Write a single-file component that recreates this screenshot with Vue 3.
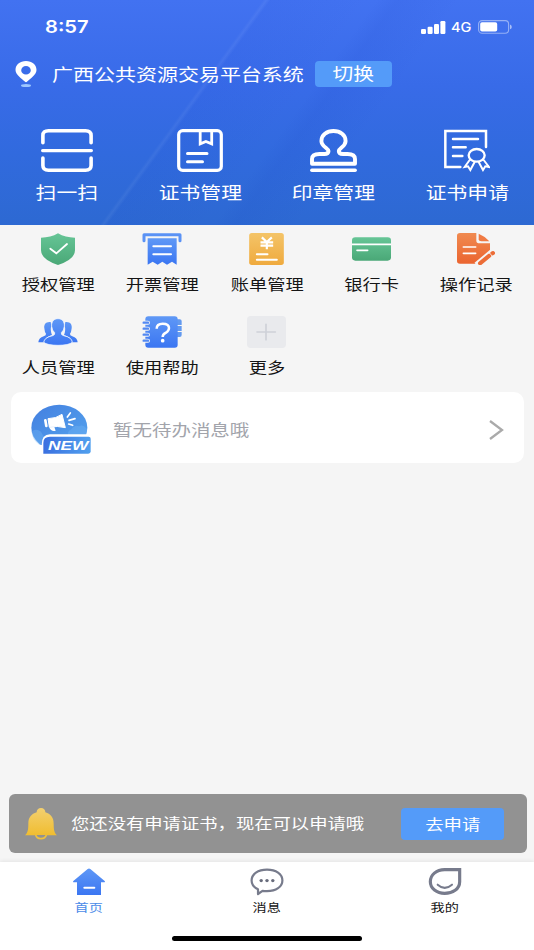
<script setup>
const menu = [
  { id: 'auth', label: '授权管理' },
  { id: 'invoice', label: '开票管理' },
  { id: 'bill', label: '账单管理' },
  { id: 'card', label: '银行卡' },
  { id: 'log', label: '操作记录' },
  { id: 'people', label: '人员管理' },
  { id: 'help', label: '使用帮助' },
  { id: 'more', label: '更多' },
]
</script>

<template>
  <div class="screen">
    <svg class="defs" width="0" height="0">
      <defs>
        <linearGradient id="g-green" x1="0" y1="0" x2="0" y2="1"><stop offset="0" stop-color="#66c596" /><stop offset="1" stop-color="#4aa877" /></linearGradient>
        <linearGradient id="g-blue" x1="0" y1="0" x2="0" y2="1"><stop offset="0" stop-color="#5f98f6" /><stop offset="1" stop-color="#3b76f2" /></linearGradient>
        <linearGradient id="g-yellow" x1="0" y1="0" x2="0" y2="1"><stop offset="0" stop-color="#f4c468" /><stop offset="1" stop-color="#efaa3e" /></linearGradient>
        <linearGradient id="g-orange" x1="0" y1="0" x2="0" y2="1"><stop offset="0" stop-color="#f08a50" /><stop offset="1" stop-color="#eb6530" /></linearGradient>
        <linearGradient id="g-bell" x1="0" y1="0" x2="0" y2="1"><stop offset="0" stop-color="#f3d070" /><stop offset="1" stop-color="#f0bd30" /></linearGradient>
        <linearGradient id="g-news" x1="0" y1="0" x2="1" y2="1"><stop offset="0" stop-color="#437fe0" /><stop offset="1" stop-color="#56a5ee" /></linearGradient>
        <linearGradient id="g-tag" x1="0" y1="0" x2="1" y2="0"><stop offset="0" stop-color="#3a70e0" /><stop offset="1" stop-color="#51a0ee" /></linearGradient>
      </defs>
    </svg>

    <header class="hero">
      <div class="status">
        <span class="time">8:57</span>
        <div class="signals">
          <svg width="25" height="13" viewBox="0 0 25 13" fill="#fff">
            <rect x="0" y="8" width="5" height="5" rx="1.2" /><rect x="6.6" y="5.7" width="5" height="7.3" rx="1.2" />
            <rect x="13" y="3" width="5" height="10" rx="1.2" /><rect x="19.4" y="0" width="5" height="13" rx="1.2" />
          </svg>
          <span class="net">4G</span>
          <svg width="34" height="14" viewBox="0 0 34 14">
            <rect x=".6" y=".6" width="30" height="12.6" rx="3.5" fill="none" stroke="#fff" stroke-opacity=".45" stroke-width="1.1" />
            <rect x="2.2" y="2.2" width="17" height="9.4" rx="1.8" fill="#fff" />
            <path d="M32 4.6q1.8 .6 1.8 2.3t-1.8 2.3z" fill="#fff" fill-opacity=".55" />
          </svg>
        </div>
      </div>

      <div class="place">
        <svg width="22" height="27" viewBox="0 0 22 27">
          <ellipse cx="11" cy="24.5" rx="5" ry="1.5" fill="#9dc6ff" />
          <path fill="#fff" fill-rule="evenodd" d="M11 0C17 0 21.5 3.7 21.5 9 21.5 14 15 17.5 12.2 20.6Q11 21.8 9.8 20.6C7 17.5 .5 14 .5 9 .5 3.7 5 0 11 0ZM11 5A4.8 4.3 0 1 0 11 13.600A4.8 4.3 0 1 0 11 5Z" />
        </svg>
        <div class="place-name"><span class="wide">广西公共资源交易平台系统</span></div>
        <button class="switch"><span class="wide">切换</span></button>
      </div>

      <nav class="quick">
        <div class="quick-item">
          <svg width="52" height="43" viewBox="0 0 52 43" fill="none" stroke="#fff" stroke-width="3.6" stroke-linecap="round">
            <path d="M1.900 13.700V6.500Q1.900 1.800 7.500 1.800H44.500Q50.100 1.800 50.100 6.500V13.700M1.900 29V36.500Q1.900 41.200 7.500 41.200H44.500Q50.100 41.200 50.100 36.500V29" />
            <path d="M1.600 21.600H50.400" stroke-width="3.200" />
          </svg>
          <span class="wide">扫一扫</span>
        </div>
        <div class="quick-item">
          <svg width="46" height="43" viewBox="0 0 46 43" fill="none" stroke="#fff" stroke-width="3.200" stroke-linecap="round">
            <rect x="1.700" y="1.600" width="42.600" height="39.800" rx="4" />
            <path d="M23.200 2V14.800L28.900 12.400L34.700 14.800V2" stroke-width="2.800" />
            <path d="M10.500 24.500H30M10.500 32.700H25.500" stroke-width="3" />
          </svg>
          <span class="wide">证书管理</span>
        </div>
        <div class="quick-item">
          <svg width="47" height="43" viewBox="0 0 47 43" fill="none" stroke="#fff" stroke-width="3.900" stroke-linecap="round" stroke-linejoin="round">
            <path d="M18.500 22C18.500 19 11.400 17.800 11.400 11.900C11.400 6.200 16.700 2 23.500 2S35.600 6.200 35.600 11.900C35.600 17.800 28.800 19 28.800 22Q28.800 25 33 25H37.500Q45 25 45 30V34.800H2V30Q2 25 9.500 25H14.300Q18.500 25 18.500 22Z" />
            <path d="M1.800 41.200H45.200" stroke-width="3.400" />
          </svg>
          <span class="wide">印章管理</span>
        </div>
        <div class="quick-item">
          <svg width="46" height="43" viewBox="525 57 138 129" fill="none" stroke="#fff" stroke-width="7.500" stroke-linecap="round">
            <path d="M651 111V63H529V171H574" />
            <path d="M552 87H627M552 112H590M552 138H580" stroke-width="7.500" />
            <ellipse cx="623" cy="136" rx="24" ry="19" stroke-width="7" />
            <path d="M602 150L587 171L597 169L604 180L617 156M644 150L660 171L649 169L642 180L629 156" stroke-width="6" />
          </svg>
          <span class="wide">证书申请</span>
        </div>
      </nav>
    </header>

    <section class="menu">
      <div v-for="item in menu" :key="item.id" class="menu-item">
        <svg v-if="item.id === 'auth'" width="34" height="32" viewBox="122 25 102 96">
          <path fill="url(#g-green)" d="M173 26Q195 39 224 39V77Q224 104 173 121Q122 104 122 77V39Q151 39 173 26Z" />
          <path d="M150 72L168 86L200 58" fill="none" stroke="#fff" stroke-width="5.500" stroke-linecap="round" />
        </svg>
        <svg v-else-if="item.id === 'invoice'" width="40" height="32" viewBox="427 25 118 96">
          <path fill="none" stroke="#5a92f5" stroke-width="9" stroke-linecap="round" stroke-linejoin="round" d="M432 48V30H540V48" />
          <path fill="url(#g-blue)" d="M443 41H530V120L516 111L501 120L487 111L473 120L458 111L443 120Z" />
          <path d="M460 65H513M460 89H513" stroke="#fff" stroke-width="6" stroke-linecap="round" />
        </svg>
        <svg v-else-if="item.id === 'bill'" width="35" height="32" viewBox="118 25 104 96">
          <rect x="118" y="25" width="104" height="96" rx="8" fill="url(#g-yellow)" />
          <path d="M156 38L171 52L186 38M171 52V74M152 53H190M152 63H190" fill="none" stroke="#fff" stroke-width="6.500" />
          <path d="M141 89H173M141 105H201" stroke="#fff" stroke-width="6" stroke-linecap="round" />
        </svg>
        <svg v-else-if="item.id === 'card'" width="39" height="32" viewBox="426 25 117 96">
          <rect x="426" y="38" width="117" height="70" rx="10" fill="url(#g-green)" />
          <path d="M426 59H543" stroke="#fff" stroke-width="5.500" /><path d="M441 77H473" stroke="#fff" stroke-width="5" stroke-linecap="round" />
        </svg>
        <svg v-else-if="item.id === 'log'" width="38" height="32" viewBox="741 25 114 96">
          <path fill="url(#g-orange)" d="M750 25H799V48Q799 56 809 56H840V79L797 117H750Q741 117 741 109V33Q741 25 750 25Z" />
          <path fill="#f07a43" d="M806 27Q824 34 838 50H814Q806 50 806 44Z" />
          <path d="M760 67H797M760 86H797" stroke="#fff" stroke-width="5" stroke-linecap="round" />
          <path d="M800 122L854 77" stroke="#f5f5f5" stroke-width="20" />
          <path d="M810 116L838 93M846 87L849 85" stroke="#ec6d37" stroke-width="12" stroke-linecap="round" />
          <path d="M838 84L847 95" stroke="#f5f5f5" stroke-width="2.500" />
        </svg>
        <svg v-else-if="item.id === 'people'" width="40" height="32" viewBox="114 33 118 96">
          <path fill="url(#g-blue)" d="M151 51C137 49 130 58 132 70Q133 82 137 86Q138 91 130 94Q115 99 114 112H131Q134 96 155 90Q149 74 153 62ZM195 51C209 49 216 58 214 70Q213 82 209 86Q208 91 216 94Q231 99 232 112H215Q212 96 191 90Q197 74 193 62Z" />
          <path fill="url(#g-blue)" stroke="#eaf2ff" stroke-width="2.500" d="M173 41C186 41 193 50 192 64Q191 77 183 83Q181 89 190 92Q215 97 216 112Q205 121 173 121Q141 121 130 112Q132 97 157 92Q165 89 163 83Q155 77 154 64C153 50 160 41 173 41Z" />
        </svg>
        <svg v-else-if="item.id === 'help'" width="40" height="32" viewBox="427 33 118 96">
          <path d="M530 43H539Q545 43 545 48V60H530ZM530 63H545V78H530ZM530 81H545V90Q545 96 539 96H530Z" fill="#6299ef" />
          <rect x="436" y="34" width="97" height="94" rx="9" fill="url(#g-blue)" />
          <path d="M434 53H444M434 71H444M434 89H444M434 107H444" stroke="#f5f5f5" stroke-width="12" stroke-linecap="round" />
          <path d="M431 53H444M431 71H444M431 89H444M431 107H444" stroke="#5389f2" stroke-width="7" stroke-linecap="round" />
          <path d="M470 71Q470 56 488 56Q507 56 507 69Q507 77 498 83Q488 88 488 96" fill="none" stroke="#fff" stroke-width="7.500" />
          <circle cx="488" cy="107" r="5.500" fill="#fff" />
        </svg>
        <svg v-else width="39" height="32" viewBox="742 33 117 96">
          <rect x="742" y="33" width="117" height="96" rx="11" fill="#e9eaed" />
          <path d="M772 81H827M799 58V104" stroke="#ced1d8" stroke-width="5" stroke-linecap="round" />
        </svg>
        <span class="wide">{{ item.label }}</span>
      </div>
    </section>

    <section class="notice">
      <svg class="news" width="60" height="51" viewBox="94 57 180 153">
        <ellipse cx="179" cy="128" rx="84" ry="69" fill="url(#g-news)" />
        <path d="M96 140Q108 128 124 140Q133 160 146 164L120 180Q96 162 96 140ZM215 133Q225 118 238 124Q251 116 262 132L261 150H205Q203 138 215 133Z" fill="#70b4f4" opacity=".4" />
        <path d="M145 101Q169 101 187 88L197 128Q174 122 149 126Z" fill="#fff" stroke="#fff" stroke-width="3" stroke-linejoin="round" />
        <path d="M137 106L140 123" stroke="#fff" stroke-width="8" stroke-linecap="round" />
        <path d="M148 127L164 126L168 137Q155 141 148 127Z" fill="#fff" />
        <path d="M203 96L212 84M208 106L226 101M207 117L219 121" stroke="#fff" stroke-width="5" stroke-linecap="round" />
        <path d="M100 215V180L126 180Q126 148 151 148H280V215Z" fill="#fff" />
        <path d="M151 155H267Q273 155 273 161V199Q273 206 266 206H131V174Q131 155 151 155Z" fill="url(#g-tag)" />
        <text x="145" y="195" class="new" textLength="121" lengthAdjust="spacingAndGlyphs">NEW</text>
      </svg>
      <div class="notice-text"><span class="wide">暂无待办消息哦</span></div>
      <svg class="chevron" width="15" height="20" viewBox="0 0 15 20" fill="none" stroke="#aaa" stroke-width="2.300"><path d="M1 1L13 10L1 19" /></svg>
    </section>

    <section class="toast">
      <svg width="32" height="32" viewBox="76 68 96 96">
        <path fill="url(#g-bell)" d="M124 68C132 68 137 73 137 81C153 86 162 96 162 115C162 135 164 142 172 150H76C84 142 86 135 86 115C86 96 95 86 111 81C111 73 116 68 124 68Z" />
        <path d="M108 149Q111 160 124 160T140 149" fill="#929292" stroke="#efc13c" stroke-width="5" />
      </svg>
      <div class="toast-text"><span class="wide">您还没有申请证书，现在可以申请哦</span></div>
      <button class="apply"><span class="wide">去申请</span></button>
    </section>

    <footer class="tabs">
      <div class="tab active">
        <svg width="32" height="28" viewBox="219 249 96 84">
          <path fill="url(#g-blue)" d="M263 252Q267 249 271 252L314 288Q317 292 311 292H303V330H231V292H223Q217 292 220 288Z" />
          <path d="M253 308H283" stroke="#fff" stroke-width="6" stroke-linecap="round" />
        </svg>
        <span class="wide">首页</span>
      </div>
      <div class="tab">
        <svg width="34" height="28" viewBox="0 0 34 28">
          <path d="M17 1.600C26 1.600 32.400 6.200 32.400 12.500S26 23.200 17 23.200Q14.500 23.200 12.500 22.800L8 26V21.200C4 19.300 1.600 16.300 1.600 12.500C1.600 6.200 8 1.600 17 1.600Z" fill="none" stroke="#777b8c" stroke-width="2.200" stroke-linejoin="round" />
          <g fill="#686c7c"><circle cx="11.200" cy="12.600" r="1.700" /><circle cx="17" cy="12.600" r="1.700" /><circle cx="22.800" cy="12.600" r="1.700" /></g>
        </svg>
        <span class="wide">消息</span>
      </div>
      <div class="tab">
        <svg width="34" height="28" viewBox="474 249 102 84" fill="none" stroke="#777b8c">
          <path d="M524 254H569V290C569 312 548 325 524 325S481 310 481 290S499 254 524 254Z" stroke-width="9.500" />
          <path d="M503 299Q524 318 546 299" stroke-width="6" stroke-linecap="round" />
        </svg>
        <span class="wide">我的</span>
      </div>
      <div class="home-bar"></div>
    </footer>
  </div>
</template>

<style>
body { background: #f5f5f5; }
</style>

<style scoped>
.screen {
  display: flex;
  flex-direction: column;
  width: 534px;
  height: 950px;
  overflow: hidden;
  background: #f5f5f5;
  color: #151515;
  font-family: "Noto Sans CJK SC", "Liberation Sans", sans-serif;
}
.defs { position: absolute; }
svg { display: block; flex: none; }
.wide {
  display: inline-block;
  white-space: nowrap;
  transform: scaleX(1.21);
}
button {
  border: 0;
  padding: 0;
  color: #fff;
  font-family: inherit;
  background: #549bf9;
}
.hero {
  height: 225px;
  flex: none;
  color: #fff;
  background:
    linear-gradient(126deg, transparent 54%, rgba(20, 60, 190, .08) 57%, transparent 66%),
    linear-gradient(126deg, transparent 37.700%, rgba(255, 255, 255, .05) 38.200%, rgba(20, 60, 200, .06) 38.800%, transparent 53%),
    linear-gradient(180deg, #4272f1 0%, #386be8 38%, #316ade 68%, #2d69d2 100%);
}
.status {
  display: flex;
  justify-content: space-between;
  align-items: center;
  height: 54px;
  padding: 0 22px 0 45px;
}
.time {
  font: 600 17.500px/20px Inter, sans-serif;
  transform: scaleX(1.15);
  transform-origin: left;
}
.signals { display: flex; align-items: center; }
.net {
  width: 20px;
  margin: 0 7px 0 5.500px;
  font: 500 13px/14px Inter, sans-serif;
  transform: scaleX(1.120);
  transform-origin: left;
}
.place {
  display: flex;
  align-items: center;
  height: 40px;
  padding-left: 15px;
}
.place-name { width: 263px; margin-left: 15px; font-size: 17.350px; line-height: 26px; }
.place-name .wide, .notice-text .wide, .toast-text .wide { transform-origin: left; }
.switch { width: 77px; height: 26px; border-radius: 4px; font-size: 17.200px; line-height: 24px; padding-bottom: 2px; }
.quick {
  display: grid;
  grid-template-columns: repeat(4, 1fr);
  padding-top: 35px;
}
.quick-item {
  display: flex;
  flex-direction: column;
  align-items: center;
  gap: 7px;
  font-size: 17.200px;
  line-height: 26px;
}
.menu {
  display: grid;
  grid-template-columns: repeat(5, 1fr);
  grid-auto-rows: 83px;
  flex: none;
  height: 159px;
  padding: 8px 5.500px 0;
}
.menu-item {
  display: flex;
  flex-direction: column;
  align-items: center;
  gap: 6px;
  font-size: 15.100px;
  line-height: 24px;
}
.notice {
  display: flex;
  align-items: center;
  flex: none;
  height: 71px;
  margin: 0 10.500px;
  padding: 0 20px 0 20.500px;
  border-radius: 10px;
  background: #fff;
}
.news { margin-top: 3px; }
.chevron { margin-top: 4px; }
.new { fill: #fff; font: italic 700 39px "Liberation Sans", sans-serif; }
.notice-text { flex: 1; margin-left: 22px; color: #a2a4ab; font-size: 16.100px; line-height: 26px; padding-top: 3px; }
.toast {
  display: flex;
  align-items: center;
  flex: none;
  height: 59px;
  margin: auto 7px 9px 9px;
  padding: 0 23px 0 16px;
  border-radius: 6px;
  background: #929292;
  color: #fff;
}
.toast-text { flex: 1; margin-left: 14px; font-size: 15.150px; line-height: 24px; padding-bottom: 3px; }
.apply { width: 103px; height: 32px; border-radius: 4px; font-size: 15.200px; line-height: 30px; padding-bottom: 2px; }
.tabs {
  display: grid;
  grid-template-columns: repeat(3, 1fr);
  grid-template-rows: 74px 5px;
  flex: none;
  height: 88px;
  background: #fff;
  box-shadow: 0 -1px 4px rgba(0, 0, 0, .07);
}
.tab {
  display: flex;
  flex-direction: column;
  align-items: center;
  gap: 2px;
  padding-top: 6px;
  font-size: 11.700px;
  line-height: 18px;
}
.tab.active { color: #4b8be8; }
.home-bar {
  grid-column: 1 / -1;
  justify-self: center;
  width: 190px;
  height: 5px;
  border-radius: 3px;
  background: #000;
}
</style>
